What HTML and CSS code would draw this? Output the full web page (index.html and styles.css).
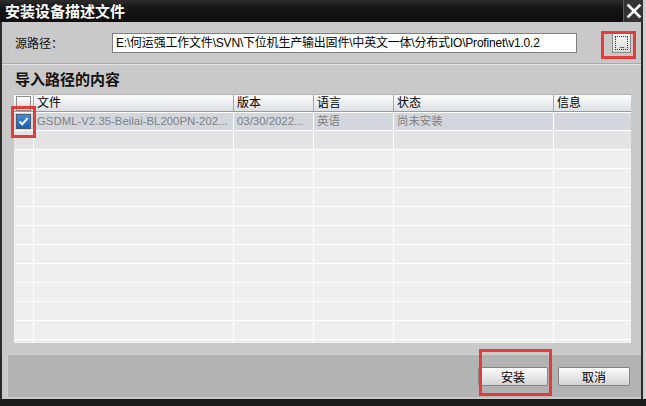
FILE: index.html
```html
<!DOCTYPE html>
<html lang="zh-CN">
<head>
<meta charset="utf-8">
<title>安装设备描述文件</title>
<link rel="stylesheet" href="styles.css">
</head>
<body>
<div class="screen">
  <div class="top-area">
    <div class="window">
      <div class="titlebar">
        <div class="title">安装设备描述文件</div>
        <div class="close">
          <svg width="16" height="16" viewBox="0 0 16 16"><path d="M2.5 2.5 L13.5 13.5 M13.5 2.5 L2.5 13.5" stroke="#fff" stroke-width="2.6" stroke-linecap="square"/></svg>
        </div>
      </div>
      <div class="frame">
        <div class="content">
          <div class="source-row">
            <div class="label">源路径：</div>
            <div class="path-input">E:\何运强工作文件\SVN\下位机生产输出固件\中英文一体\分布式IO\Profinet\v1.0.2</div>
            <div class="browse-wrap">
              <div class="browse-btn"><span class="focus-ring">...</span></div>
              <div class="mark mark-browse"></div>
            </div>
          </div>
          <div class="separator"></div>
          <div class="section-title">导入路径的内容</div>
          <div class="table">
            <div class="row head">
              <div class="cell chk"><span class="box"></span></div>
              <div class="cell">文件</div>
              <div class="cell">版本</div>
              <div class="cell">语言</div>
              <div class="cell">状态</div>
              <div class="cell last">信息</div>
            </div>
            <div class="tbody">
              <div class="row sel">
                <div class="cell chk">
                  <span class="box checked">
                    <svg width="11" height="11" viewBox="0 0 11 11"><path d="M1.5 5.5 L4.2 8.3 L9.6 2.2" fill="none" stroke="#fff" stroke-width="2"/></svg>
                  </span>
                </div>
                <div class="cell">GSDML-V2.35-Beilai-BL200PN-202...</div>
                <div class="cell">03/30/2022...</div>
                <div class="cell">英语</div>
                <div class="cell">尚未安装</div>
                <div class="cell last"></div>
              </div>
              <div class="row alt"><div class="cell chk"></div><div class="cell"></div><div class="cell"></div><div class="cell"></div><div class="cell"></div><div class="cell last"></div></div>
              <div class="row"><div class="cell chk"></div><div class="cell"></div><div class="cell"></div><div class="cell"></div><div class="cell"></div><div class="cell last"></div></div>
              <div class="row"><div class="cell chk"></div><div class="cell"></div><div class="cell"></div><div class="cell"></div><div class="cell"></div><div class="cell last"></div></div>
              <div class="row"><div class="cell chk"></div><div class="cell"></div><div class="cell"></div><div class="cell"></div><div class="cell"></div><div class="cell last"></div></div>
              <div class="row"><div class="cell chk"></div><div class="cell"></div><div class="cell"></div><div class="cell"></div><div class="cell"></div><div class="cell last"></div></div>
              <div class="row"><div class="cell chk"></div><div class="cell"></div><div class="cell"></div><div class="cell"></div><div class="cell"></div><div class="cell last"></div></div>
              <div class="row"><div class="cell chk"></div><div class="cell"></div><div class="cell"></div><div class="cell"></div><div class="cell"></div><div class="cell last"></div></div>
              <div class="row"><div class="cell chk"></div><div class="cell"></div><div class="cell"></div><div class="cell"></div><div class="cell"></div><div class="cell last"></div></div>
              <div class="row"><div class="cell chk"></div><div class="cell"></div><div class="cell"></div><div class="cell"></div><div class="cell"></div><div class="cell last"></div></div>
              <div class="row"><div class="cell chk"></div><div class="cell"></div><div class="cell"></div><div class="cell"></div><div class="cell"></div><div class="cell last"></div></div>
              <div class="row"><div class="cell chk"></div><div class="cell"></div><div class="cell"></div><div class="cell"></div><div class="cell"></div><div class="cell last"></div></div>
              <div class="row"><div class="cell chk"></div><div class="cell"></div><div class="cell"></div><div class="cell"></div><div class="cell"></div><div class="cell last"></div></div>
            </div>
            <div class="mark mark-check"></div>
          </div>
          <div class="spacer"></div>
          <div class="bottom-panel">
            <div class="btn-wrap">
              <div class="btn btn-install">安装</div>
              <div class="mark mark-install"></div>
            </div>
            <div class="btn btn-cancel">取消</div>
          </div>
        </div>
      </div>
    </div>
    <div class="right-strip"></div>
  </div>
  <div class="bottom-strip"></div>
</div>
</body>
</html>
```
FILE: styles.css
```css
* { box-sizing: border-box; }
html, body { margin: 0; padding: 0; }
body {
  width: 646px;
  height: 406px;
  overflow: hidden;
  background: #1b1b1b;
  font-family: "Liberation Sans", "Noto Sans CJK SC", sans-serif;
  font-size: 12px;
  color: #000;
}
.screen { display: flex; flex-direction: column; height: 406px; }
.top-area { display: flex; height: 399px; }
.right-strip { width: 3px; background: #cfcfcf; }
.bottom-strip { flex: 1; background: #1b1b1b; }

.window { width: 643px; display: flex; flex-direction: column; background: #2a2a2a; }
.titlebar {
  height: 22px;
  display: flex;
  align-items: center;
  background: linear-gradient(#2c2c2c, #141414 40%, #0e0e0e);
}
.title {
  flex: 1;
  padding-left: 5px;
  color: #fff;
  font-family: "Noto Sans CJK SC", sans-serif;
  font-weight: bold;
  font-size: 15px;
  line-height: 22px;
}
.close {
  width: 20px;
  height: 22px;
  display: flex;
  align-items: center;
  justify-content: center;
  background: #333;
  border-left: 1px solid #5a5a5a;
}
.frame { flex: 1; display: flex; padding: 0 2px 0 2px; background: #2b2b2b; }
.content { flex: 1; display: flex; flex-direction: column; background: #c9c9c9; }

.source-row { height: 41px; display: flex; align-items: center; padding-left: 13px; }
.label { width: 97px; font-family: "Noto Sans CJK SC", sans-serif; font-size: 12px; color: #111; }
.path-input {
  width: 465px;
  height: 20px;
  background: #fff;
  border: 1px solid #7f7f7f;
  padding-left: 3px;
  line-height: 18px;
  white-space: nowrap;
  overflow: hidden;
  font-family: "Liberation Sans", "Noto Sans CJK SC", sans-serif;
  font-size: 12px;
  letter-spacing: -0.2px;
}
.browse-wrap { position: relative; margin-left: 35px; }
.browse-btn {
  width: 19px;
  height: 20px;
  border: 1px solid #8a8a8a;
  background: linear-gradient(#fafafa, #d9d9d9);
  padding: 2px;
}
.focus-ring {
  display: block;
  width: 100%;
  height: 100%;
  border: 1px dotted #333;
  font-size: 9px;
  line-height: 16px;
  text-align: center;
  letter-spacing: -1px;
}
.mark { position: absolute; border: 3px solid #e63b3b; pointer-events: none; }
.mark-browse { left: -11px; top: -2px; right: -5px; bottom: -6px; }

.separator { height: 2px; border-top: 1px solid #a9a9a9; border-bottom: 1px solid #e2e2e2; }
.section-title {
  height: 29px;
  display: flex;
  align-items: center;
  padding: 0 0 2px 13px;
  font-family: "Noto Sans CJK SC", sans-serif;
  font-weight: bold;
  font-size: 15px;
  color: #111;
}

.table { position: relative; margin-left: 12px; width: 617px; background: #efefef; }
.row {
  display: grid;
  grid-template-columns: 20px 200px 80px 80px 160px 77px;
  height: 19px;
}
.cell {
  border-right: 1px solid #fff;
  border-bottom: 1px solid #fff;
  padding-left: 3px;
  line-height: 18px;
  white-space: nowrap;
  overflow: hidden;
  font-family: "Liberation Sans", "Noto Sans CJK SC", sans-serif;
}
.cell.last { border-right: none; }
.head { height: 18px; background: linear-gradient(#fdfdfd, #e9ebee 60%, #dcdfe3); border-top: 1px solid #b4b4b4; border-bottom: 1px solid #9a9a9a; }
.head .cell { border-right: 1px solid #a8a8a8; border-bottom: none; line-height: 16px; color: #000; }
.head .cell.last { border-right: none; }
.tbody { height: 231px; overflow: hidden; }
.row.sel { background: #d3d7dd; border-top: 1px solid #fff; }
.row.sel .cell { color: #808080; line-height: 17px; font-size: 11.4px; }
.row.alt { background: #e4e4e4; }
.chk { padding-left: 2px; overflow: visible; display: flex; align-items: center; }
.box {
  width: 15px;
  height: 15px;
  border: 1px solid #8c8c8c;
  background: linear-gradient(#ffffff, #d6d6d6);
  display: flex;
  align-items: center;
  justify-content: center;
}
.box.checked { border: 1px solid #4a5a6a; background: linear-gradient(#3f8ee0, #1460b8); }
.mark-check { left: -3px; top: 12px; width: 25px; height: 32px; }

.spacer { height: 11px; }
.bottom-panel {
  flex: 1;
  margin-left: 5px;
  background: #b3b3b3;
  border-top: 1px solid #d3d3d3;
  border-left: 1px solid #d0d0d0;
  border-bottom: 2px solid #c8c8c8;
  display: flex;
  align-items: center;
  justify-content: flex-end;
  padding-right: 11px;
  gap: 10px;
}
.btn-wrap { position: relative; }
.btn {
  height: 19px;
  border: 1px solid #858585;
  border-radius: 2px;
  background: linear-gradient(#fbfbfb, #e6e6e6 55%, #d3d3d3);
  text-align: center;
  line-height: 17px;
  font-family: "Noto Sans CJK SC", sans-serif;
  font-size: 12px;
}
.btn-install { width: 70px; }
.btn-cancel { width: 72px; }
.mark-install { left: 1px; top: -18px; right: -4px; bottom: -10px; }
```
